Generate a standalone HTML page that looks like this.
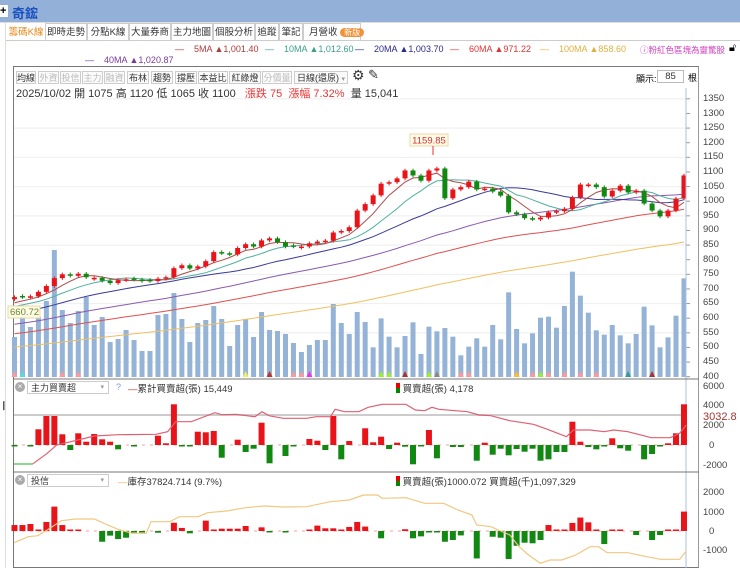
<!DOCTYPE html>
<html><head><meta charset="utf-8">
<style>
*{margin:0;padding:0;box-sizing:border-box}
body{width:740px;height:568px;overflow:hidden;background:#fff;font-family:"Liberation Sans","Noto Sans CJK TC",sans-serif;position:relative;color:#333}
.a{position:absolute;white-space:nowrap}
.top{left:0;top:0;width:740px;height:22px;background:#93b0d8}
.tab{top:23px;height:17px;font-size:9.5px;line-height:17px;border:1px solid #ccc;border-bottom:none;text-align:center;background:#fff;color:#333}
.tb{top:71px;height:13px;font-size:9px;line-height:12px;border:1px solid #ccc;text-align:center;color:#333;background:#fafafa}
.dis{color:#bbb}
.lg{font-size:9px;top:44px}
.ax{font-size:9.5px;color:#444;left:703px}
</style></head><body>
<div class="a top"></div>
<div class="a" style="left:0;top:5px;width:8px;height:12px;background:#fff;font-size:11px;line-height:12px;font-weight:bold;color:#000">+</div>
<div class="a" style="left:12px;top:3px;font-size:13px;font-weight:bold;color:#1a4fc0">奇鋐</div>
<div class="a" style="left:0;top:22px;width:740px;height:1px;background:#ddd"></div>
<div class="a" style="left:5px;top:40px;width:735px;height:1px;background:#ccc"></div>
<div class="a" style="left:5px;top:23px;width:1px;height:545px;background:#ddd"></div>
<div class="a tab" style="left:7px;width:38px;color:#e8891b;border-color:#fff">籌碼K線</div>
<div class="a tab" style="left:45px;width:42px">即時走勢</div>
<div class="a tab" style="left:87px;width:42px">分點K線</div>
<div class="a tab" style="left:129px;width:42px">大量券商</div>
<div class="a tab" style="left:171px;width:42px">主力地圖</div>
<div class="a tab" style="left:213px;width:42px">個股分析</div>
<div class="a tab" style="left:255px;width:24px">追蹤</div>
<div class="a tab" style="left:279px;width:24px">筆記</div>
<div class="a tab" style="left:303px;width:58px;text-align:left;padding-left:5px">月營收 <span style="background:#f0923a;color:#fff;border-radius:6px;padding:0 4px;font-size:8px">新版</span></div>

<div class="a lg" style="left:175px;color:#b03a3a">—&nbsp;&nbsp;&nbsp; 5MA ▲1,001.40</div>
<div class="a lg" style="left:265px;color:#3aa08a">—&nbsp;&nbsp;&nbsp; 10MA ▲1,012.60</div>
<div class="a lg" style="left:355px;color:#2a2a8a">—&nbsp;&nbsp;&nbsp; 20MA ▲1,003.70</div>
<div class="a lg" style="left:450px;color:#d33">—&nbsp;&nbsp;&nbsp; 60MA ▲971.22</div>
<div class="a lg" style="left:540px;color:#e0b040">—&nbsp;&nbsp;&nbsp; 100MA ▲858.60</div>
<div class="a lg" style="left:640px;color:#d040c0;font-size:8.5px">ⓘ粉紅色區塊為靈驚股</div>
<div class="a" style="left:729px;top:42px;font-size:11px;color:#000">🔓︎</div>
<div class="a lg" style="left:85px;top:55px;color:#7a3a9a">—&nbsp;&nbsp;&nbsp; 40MA ▲1,020.87</div>

<div class="a" style="left:13px;top:66px;width:686px;height:502px;border:1px solid #777;border-right-color:#999"></div>
<div class="a tb" style="left:16px;width:20px">均線</div>
<div class="a tb dis" style="left:38px;width:21px">外資</div>
<div class="a tb dis" style="left:60px;width:21px">投信</div>
<div class="a tb dis" style="left:82px;width:21px">主力</div>
<div class="a tb dis" style="left:104px;width:21px">融資</div>
<div class="a tb" style="left:127px;width:22px">布林</div>
<div class="a tb" style="left:151px;width:22px">趨勢</div>
<div class="a tb" style="left:175px;width:22px">撐壓</div>
<div class="a tb" style="left:198px;width:30px">本益比</div>
<div class="a tb" style="left:229px;width:32px">紅綠燈</div>
<div class="a tb dis" style="left:262px;width:30px">分價量</div>
<div class="a tb" style="left:294px;width:54px;text-align:left;padding-left:2px">日線(還原) <span style="color:#999;font-size:7px">▾</span></div>
<div class="a" style="left:352px;top:67px;font-size:14px;color:#333">⚙</div>
<div class="a" style="left:368px;top:67px;font-size:13px;color:#333">✎</div>
<div class="a" style="left:636px;top:72px;font-size:9px;color:#000">顯示:</div>
<div class="a" style="left:657px;top:70px;width:27px;height:13px;border:1px solid #bbb;font-size:9.5px;text-align:center;line-height:12px">85</div>
<div class="a" style="left:688px;top:71px;font-size:9px;color:#000">根</div>
<div class="a" style="left:16px;top:85px;font-size:11px;color:#333">2025/10/02 開 1075 高 1120 低 1065 收 1100 &nbsp;&nbsp;<span style="color:#e33">漲跌 75 &nbsp;漲幅 7.32%</span> &nbsp;量 15,041</div>

<div class="a ax" style="top:93px">1350</div><div class="a ax" style="top:108px">1300</div><div class="a ax" style="top:122px">1250</div>
<div class="a ax" style="top:137px">1200</div><div class="a ax" style="top:151px">1150</div><div class="a ax" style="top:166px">1100</div>
<div class="a ax" style="top:181px">1050</div><div class="a ax" style="top:195px">1000</div><div class="a ax" style="top:210px">950</div>
<div class="a ax" style="top:224px">900</div><div class="a ax" style="top:239px">850</div><div class="a ax" style="top:254px">800</div>
<div class="a ax" style="top:268px">750</div><div class="a ax" style="top:283px">700</div><div class="a ax" style="top:297px">650</div>
<div class="a ax" style="top:312px">600</div><div class="a ax" style="top:327px">550</div><div class="a ax" style="top:341px">500</div>
<div class="a ax" style="top:356px">450</div><div class="a ax" style="top:371px">400</div>

<div class="a ax" style="top:381px">6000</div><div class="a ax" style="top:400px">4000</div><div class="a ax" style="top:420px">2000</div>
<div class="a ax" style="top:440px;left:709px">0</div><div class="a ax" style="top:460px">-2000</div>
<div class="a" style="left:703px;top:411px;font-size:11px;color:#a33">3032.8</div>
<div class="a ax" style="top:487px">2000</div><div class="a ax" style="top:507px">1000</div>
<div class="a ax" style="top:526px;left:709px">0</div><div class="a ax" style="top:545px">-1000</div>

<div class="a" style="left:0;top:400px;font-size:9px;color:#555">❙</div>

<svg class="a" style="left:0;top:0" width="740" height="568" id="s"></svg>

<div class="a" style="left:15px;top:382px;width:10px;height:10px;border-radius:50%;background:#aaa;color:#fff;font-size:8px;line-height:10px;text-align:center">×</div>
<div class="a" style="left:27px;top:381px;width:82px;height:13px;border:1px solid #ccc;font-size:9px;line-height:12px;padding-left:3px;background:#fff">主力買賣超<span style="position:absolute;right:4px;color:#999;font-size:7px">▾</span></div>
<div class="a" style="left:116px;top:382px;font-size:9px;color:#7a9ad0">?</div>
<div class="a" style="left:128px;top:381px;font-size:9.5px;color:#333"><span style="color:#c33">—</span>累計買賣超(張) 15,449</div>
<div class="a" style="left:396px;top:381px;font-size:9.5px;color:#333"><span style="display:inline-block;width:4px;height:10px;background:linear-gradient(#e00 50%,#080 50%);vertical-align:-1px"></span> 買賣超(張) 4,178</div>

<div class="a" style="left:15px;top:475px;width:10px;height:10px;border-radius:50%;background:#aaa;color:#fff;font-size:8px;line-height:10px;text-align:center">×</div>
<div class="a" style="left:27px;top:474px;width:82px;height:13px;border:1px solid #ccc;font-size:9px;line-height:12px;padding-left:3px;background:#fff">投信<span style="position:absolute;right:4px;color:#999;font-size:7px">▾</span></div>
<div class="a" style="left:118px;top:474px;font-size:9.5px;color:#333"><span style="color:#e0b060">—</span>庫存37824.714 (9.7%)</div>
<div class="a" style="left:396px;top:474px;font-size:9.5px;color:#333"><span style="display:inline-block;width:4px;height:10px;background:linear-gradient(#e00 50%,#080 50%);vertical-align:-1px"></span> 買賣超(張)1000.072 買賣超(千)1,097,329</div>

<script>
var S=document.getElementById('s'),o='';
function X(i){return 14.5+7.97*i}
function PY(p){return 376.7-(p-400)*0.2925}
var C=[672,672,675,690,710,737,750,745,752,740,738,728,720,730,733,732,727,727,735,740,771,781,770,777,795,826,822,818,840,853,845,866,873,860,845,845,845,856,862,865,893,898,911,968,990,1020,1060,1065,1078,1105,1088,1070,1105,1112,1010,1040,1048,1067,1040,1043,1033,1019,962,955,942,938,944,962,966,974,1013,1057,1057,1048,1016,1036,1053,1030,1036,992,968,948,968,1009,1088];
var V=[337,317,327,317,301,250,310,323,311,297,325,317,342,339,330,340,351,351,315,314,293,319,342,323,320,306,319,346,325,319,337,312,330,331,334,343,352,345,340,340,304,323,334,312,322];
[652,565,620,652,618,577,672,590,604,594,620,676,650,625,650,585,628,487,597,640,610,563,560,593,528,425,497,548,601,614,585,616,640,612,530,586,652,622,557,445].forEach(function(z){V.push(130+z/3)});
for(var p=450;p<=1350;p+=100){o+='<line x1="14" x2="686" y1="'+PY(p)+'" y2="'+PY(p)+'" stroke="#eee"/>'}
for(var p=400;p<=1350;p+=50){o+='<line x1="686" x2="690" y1="'+PY(p)+'" y2="'+PY(p)+'" stroke="#999"/>'}
for(var i=0;i<85;i++){o+='<rect x="'+(X(i)-2.5)+'" y="'+V[i]+'" width="5" height="'+(377-V[i])+'" fill="#94b3d6"/>'}
var mk=[[0,'#f99'],[1,'#5dd'],[6,'#f99'],[8,'#f99'],[29,'#ee6'],[32,'#b33'],[35,'#f99'],[36,'#f99'],[37,'#e3e'],[46,'#9e3'],[47,'#9e3'],[49,'#a33'],[52,'#9e3'],[53,'#888'],[56,'#f99'],[57,'#f99'],[63,'#fb3'],[65,'#f99'],[66,'#9e3'],[67,'#f99'],[69,'#f99'],[71,'#f99'],[73,'#f99'],[77,'#399'],[80,'#a33']];
mk.forEach(function(m){var x=X(m[0]);o+='<path d="M'+(x-3)+' 377L'+x+' 371L'+(x+3)+' 377Z" fill="'+m[1]+'"/>'});
var H=[];for(var t=0;t<100;t++)H.push(420+240*Math.pow(t/100,2));
var A=H.concat(C);
function ma(n,col){var d='';for(var i=0;i<85;i++){var k=100+i,s=0;for(var j=0;j<n;j++)s+=A[k-j];d+=(i?'L':'M')+X(i).toFixed(1)+' '+PY(s/n).toFixed(1)}o+='<path d="'+d+'" fill="none" stroke="'+col+'" stroke-width="1"/>'}
ma(100,'#f0c060');ma(60,'#e05050');ma(40,'#8a5ab0');ma(20,'#3a3a9a');ma(10,'#50b0a0');ma(5,'#b04a4a');
for(var i=0;i<85;i++){var op=i?C[i-1]:665,c=C[i];if(Math.abs(c-op)<3)op=c+(i%2?4:-4);var up=c>=op,col=up?'#e8141a':'#118811';var hi=Math.max(op,c)+6,lo=Math.min(op,c)-6;var x=X(i);
o+='<line x1="'+x+'" x2="'+x+'" y1="'+PY(hi)+'" y2="'+PY(lo)+'" stroke="'+col+'"/>';
var y1=PY(Math.max(op,c)),h=Math.max(1.5,PY(Math.min(op,c))-y1);o+='<rect x="'+(x-2.5)+'" y="'+y1+'" width="5" height="'+h+'" fill="'+col+'"/>'}
o+='<rect x="410" y="134" width="38" height="12" fill="#fffbe8" stroke="#f0d8a0"/><text x="429" y="143.5" font-size="9.5" fill="#c33" text-anchor="middle" font-family="Liberation Sans">1159.85</text><line x1="433" x2="433" y1="146" y2="155" stroke="#e33"/>';
o+='<rect x="8" y="306" width="32" height="12" fill="#fffbe8" stroke="#e8d8a0"/><text x="10" y="315" font-size="9.5" fill="#6a8a2a" font-family="Liberation Sans">660.72</text>';
o+='<line x1="686" x2="686" y1="88" y2="568" stroke="#aac0e0"/>';
o+='<line x1="13" x2="699" y1="379" y2="379" stroke="#777"/><line x1="13" x2="699" y1="472" y2="472" stroke="#777"/>';
o+='<line x1="14" x2="686" y1="415" y2="415" stroke="#ccc" stroke-width="2"/>';
var P2={0:-100,2:-100,3:1570,4:2900,5:2900,6:1070,7:-500,8:1170,9:330,10:1100,11:570,12:330,13:-430,15:-130,18:930,19:170,20:4070,21:-100,22:-100,23:1330,24:1270,25:1400,26:-1270,28:530,29:-700,30:-370,31:2230,32:-1830,34:-1100,35:-100,37:600,38:430,39:-500,40:2900,41:-1430,42:400,44:1670,45:270,46:830,47:-400,48:230,49:-170,50:-1930,51:-100,52:1500,53:-1330,55:-200,56:-200,58:-1570,59:230,60:-970,61:-370,62:-1030,63:-400,64:-670,65:-370,66:-1570,67:-1430,68:-700,69:-700,70:2330,71:330,72:-200,73:-430,74:-100,75:670,76:-330,77:-570,79:-1430,80:-900,81:-100,82:170,83:1170,84:4070};
o+='<line x1="14" x2="686" y1="445" y2="445" stroke="#f0a0a0" stroke-dasharray="3,5"/>';
function bars(P,z,k){for(var i in P){var v=P[i],x=X(+i),h=Math.max(1.5,Math.abs(v)*k),y=v>0?z-h:z;o+='<rect x="'+(x-3)+'" y="'+y+'" width="6" height="'+h+'" fill="'+(v>0?'#e8141a':'#118811')+'"/>'}}
bars(P2,445,0.01);
function line(pts,col){var d='';for(var i=0;i<pts.length;i+=2)d+=(i?'L':'M')+(pts[i]*0.472).toFixed(1)+' '+(370+pts[i+1]/3).toFixed(1);o+='<path d="'+d+'" fill="none" stroke="'+col+'" stroke-width="1.2"/>'}
o+='<path d="M14 464L33 464" stroke="#6c6" stroke-width="1.5"/>';
line([70,281,100,250,120,225,150,215,200,198,250,194,330,193,355,185,372,155,405,155,455,128,470,134,500,133,540,140,555,125,570,137,600,145,650,145,670,140,700,140,710,118,730,125,760,125,780,112,810,103,860,103,880,120,900,122,915,112,930,118,990,125,1015,135,1040,137,1080,152,1130,163,1160,178,1200,200,1215,180,1250,180,1280,185,1300,180,1330,185,1380,203,1420,203,1440,190,1454,165],'#e06070');
var P3={0:310,1:310,2:365,3:50,4:470,5:1270,6:310,7:50,8:30,11:-560,12:-240,13:-420,14:-350,15:-50,16:-40,18:-90,20:430,21:160,22:-120,24:540,25:30,26:120,27:120,28:120,29:260,31:190,32:-30,34:-30,37:20,38:280,39:140,40:140,41:30,42:210,43:470,44:230,46:-380,49:90,50:-380,51:-280,52:-30,53:-30,54:-560,55:-470,56:-230,58:-1430,60:-300,61:-350,62:-1460,63:-770,64:-610,65:-640,66:-470,67:310,68:20,69:20,70:420,71:700,72:450,73:20,74:-680,75:20,76:20,78:-210,80:-470,81:-210,82:20,83:20,84:1010};
o+='<line x1="14" x2="686" y1="531" y2="531" stroke="#f0a0a0" stroke-dasharray="3,5"/>';
bars(P3,531,0.0192);
line([30,518,60,500,80,497,100,480,130,452,160,447,200,447,220,460,250,478,280,490,310,490,320,455,340,455,360,455,380,440,420,440,440,428,480,423,520,413,560,408,600,411,650,410,700,395,740,390,770,375,800,375,810,385,860,383,900,400,940,400,970,420,1000,435,1010,465,1040,470,1080,495,1100,530,1120,555,1145,580,1165,570,1190,570,1220,555,1250,530,1268,530,1286,548,1330,548,1370,560,1400,568,1440,568,1454,543],'#f0c880');
S.innerHTML=o;
</script>
</body></html>
